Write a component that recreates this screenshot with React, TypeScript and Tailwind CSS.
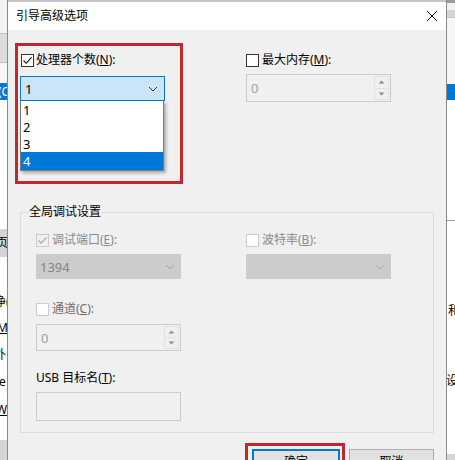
import React from "react";

const Box = ({ checked, disabled }: { checked?: boolean; disabled?: boolean }) => (
  <div
    className={
      "w-[13px] h-[13px] shrink-0 border flex items-center justify-center " +
      (disabled ? "border-[#cccccc] " + (checked ? "bg-[#f0f0f0]" : "bg-white") : "border-[#333333] bg-white")
    }
  >
    {checked && (
      <svg width="11" height="11" viewBox="0 0 11 11">
        <path d="M1.5 5.5 L4.2 8.2 L9.6 2.4" fill="none" stroke={disabled ? "#a8a8a8" : "#222"} strokeWidth="1.2" />
      </svg>
    )}
  </div>
);

const Chevron = ({ color }: { color: string }) => (
  <svg width="10" height="6" viewBox="0 0 10 6">
    <path d="M1 1 L5 5 L9 1" fill="none" stroke={color} strokeWidth="1" />
  </svg>
);

const Spin = ({ h }: { h: string }) => (
  <div className={"flex border border-[#cccccc] bg-[#f0f0f0] " + h}>
    <div className="flex-1 pl-[4px] flex items-center text-[#a0a0a0] text-[13px]">0</div>
    <div className="w-[15px] my-[1px] mr-[1px] flex flex-col border border-[#e3e3e3]">
      <div className="flex-1 flex items-center justify-center border-b border-[#e3e3e3]">
        <svg width="7" height="4" viewBox="0 0 7 4">
          <path d="M0.5 3.5 L3.5 0.5 L6.5 3.5 Z" fill="#8f8f8f" />
        </svg>
      </div>
      <div className="flex-1 flex items-center justify-center">
        <svg width="7" height="4" viewBox="0 0 7 4">
          <path d="M0.5 0.5 L3.5 3.5 L6.5 0.5 Z" fill="#8f8f8f" />
        </svg>
      </div>
    </div>
  </div>
);

export default function App() {
  return (
    <div className="w-[455px] h-[460px] overflow-hidden flex font-['Noto_Sans','Noto_Sans_CJK_SC',sans-serif] text-[12px] leading-[16px] text-black bg-white">
      {/* left background strip */}
      <div className="w-[7px] shrink-0 flex flex-col overflow-hidden whitespace-nowrap">
        <div className="h-[33px] shrink-0 bg-[#f4f4f4]" />
        <div className="h-[30px] shrink-0 bg-[#dcdcdc] border-y border-[#bdbdbd]" />
        <div className="h-[20px] shrink-0 bg-[#f7f7f7]" />
        <div className="h-[17px] shrink-0 bg-[#0078d7] text-white flex items-center -ml-[2px]">(C</div>
        <div className="h-[129px] shrink-0 bg-white" />
        <div className="h-[28px] shrink-0 bg-[#d4d4d4] flex items-center -ml-[4px]">页(</div>
        <div className="h-[33px] shrink-0 bg-white" />
        <div className="h-[23px] shrink-0 flex items-center -ml-[6px]">净(</div>
        <div className="h-[30px] shrink-0 flex items-center -ml-[3px] underline">M</div>
        <div className="h-[24px] shrink-0 flex items-center -ml-[6px]">外</div>
        <div className="h-[30px] shrink-0 flex items-center -ml-[1px]">e</div>
        <div className="h-[26px] shrink-0 flex items-center -ml-[4px] underline">W</div>
        <div className="h-[17px] shrink-0 bg-white" />
        <div className="flex-1 bg-[#d6d6d6]" />
      </div>

      {/* dialog */}
      <div className="w-[440px] shrink-0 flex flex-col border-x border-[#8a8a8a]">
        <div className="h-[2px] shrink-0 bg-[#c4c4c4]" />
        <div className="h-[28px] shrink-0 bg-white flex items-center justify-between pl-[8px] pr-[8px]">
          <span>引导高级选项</span>
          <svg width="12" height="12" viewBox="0 0 12 12">
            <path d="M1 1 L11 11 M11 1 L1 11" stroke="#111" strokeWidth="1" />
          </svg>
        </div>

        <div className="flex-1 shrink-0 bg-[#f0f0f0] relative">
          {/* top row */}
          <div className="pl-[12px] pt-[22px] flex">
            <div className="w-[145px] relative">
              <div className="flex items-center gap-[2px] h-[16px] ml-[1px]">
                <Box checked />
                <span>
                  处理器个数(<span className="underline">N</span>):
                </span>
              </div>
              <div className="relative mt-[8px]">
                <div className="h-[25px] border border-[#0078d7] bg-[#cce4f7] flex items-center justify-between pl-[4px] pr-[6px] text-[13px]">
                  <span>1</span>
                  <Chevron color="#333" />
                </div>
                <div className="absolute left-0 top-[25px] w-[144px] h-[70px] bg-white border border-[#7a7a7a] border-t-0 shadow-[2px_2px_3px_rgba(0,0,0,0.3)] flex flex-col text-[13px]">
                  <div className="h-[17px] pl-[2px] flex items-center">1</div>
                  <div className="h-[17px] pl-[2px] flex items-center">2</div>
                  <div className="h-[17px] pl-[2px] flex items-center">3</div>
                  <div className="h-[18px] pl-[2px] flex items-center bg-[#0078d7] text-white">4</div>
                </div>
              </div>
            </div>
            <div className="w-[145px] ml-[81px]">
              <div className="flex items-center gap-[3px] h-[16px]">
                <Box />
                <span>
                  最大内存(<span className="underline">M</span>):
                </span>
              </div>
              <div className="mt-[6px]">
                <Spin h="h-[28px]" />
              </div>
            </div>
          </div>

          {/* group box */}
          <div className="ml-[12px] mt-[110px] w-[414px] border border-[#dcdcdc] pb-[11px]">
            <div className="-mt-[9px] ml-[7px] px-[1px] w-fit bg-[#f0f0f0] h-[16px]">全局调试设置</div>
            <div className="pl-[15px] pt-[12px] flex">
              <div className="w-[145px]">
                <div className="flex items-center gap-[3px] h-[16px]">
                  <Box checked disabled />
                  <span className="text-[#8a8a8a]">
                    调试端口(<span className="underline">E</span>):
                  </span>
                </div>
                <div className="mt-[6px] h-[25px] bg-[#cccccc] flex items-center justify-between pl-[4px] pr-[6px] text-[#838383] text-[13px]">
                  <span>1394</span>
                  <Chevron color="#a8a8a8" />
                </div>
                <div className="mt-[22px] flex items-center gap-[3px] h-[16px]">
                  <Box disabled />
                  <span className="text-[#6d6d6d]">
                    通道(<span className="underline">C</span>):
                  </span>
                </div>
                <div className="mt-[7px]">
                  <Spin h="h-[27px]" />
                </div>
                <div className="mt-[19px] h-[16px]">
                  USB 目标名(<span className="underline">T</span>):
                </div>
                <div className="mt-[6px] h-[29px] border border-[#cccccc] bg-[#f0f0f0]" />
              </div>
              <div className="w-[145px] ml-[65px]">
                <div className="flex items-center gap-[3px] h-[16px]">
                  <Box disabled />
                  <span className="text-[#8a8a8a]">
                    波特率(<span className="underline">B</span>):
                  </span>
                </div>
                <div className="mt-[6px] h-[25px] bg-[#cccccc] flex items-center justify-end pr-[6px]">
                  <Chevron color="#a8a8a8" />
                </div>
              </div>
            </div>
          </div>

          {/* buttons */}
          <div className="mt-[16px] flex justify-end pr-[12px] gap-[9px]">
            <div className="relative">
              <div className="w-[88px] h-[25px] bg-[#e1e1e1] border-2 border-[#0078d7] flex items-center justify-center">
                确定
              </div>
              <div className="absolute -left-[7px] -top-[6px] w-[100px] h-[40px] border-[3px] border-[#c1272d]" />
            </div>
            <div className="w-[85px] h-[25px] bg-[#e1e1e1] border border-[#adadad] flex items-center justify-center">
              取消
            </div>
          </div>

          {/* red annotation box */}
          <div className="absolute left-[7px] top-[13px] w-[168px] h-[141px] border-[3px] border-[#c1272d]" />
        </div>
      </div>

      {/* right background strip */}
      <div className="w-[8px] shrink-0 flex flex-col overflow-hidden whitespace-nowrap">
        <div className="h-[3px] shrink-0 bg-[#9a9a9a]" />
        <div className="h-[7px] shrink-0 bg-[#f0f0f0]" />
        <div className="h-[7px] shrink-0 bg-[#d6d6d6]" />
        <div className="h-[67px] shrink-0 bg-[#f5f5f5] border-t border-[#c8c8c8]" />
        <div className="h-[16px] shrink-0 bg-[#0078d7]" />
        <div className="h-[120px] shrink-0 bg-white" />
        <div className="h-[1px] shrink-0 bg-[#a0a0a0]" />
        <div className="h-[80px] shrink-0 bg-white" />
        <div className="h-[20px] shrink-0 flex items-center ml-[1px]">和</div>
        <div className="h-[50px] shrink-0 bg-white" />
        <div className="h-[20px] shrink-0 flex items-center -ml-[1px]">设</div>
        <div className="h-[63px] shrink-0 bg-white" />
        <div className="flex-1 bg-[#d6d6d6]" />
      </div>
    </div>
  );
}
